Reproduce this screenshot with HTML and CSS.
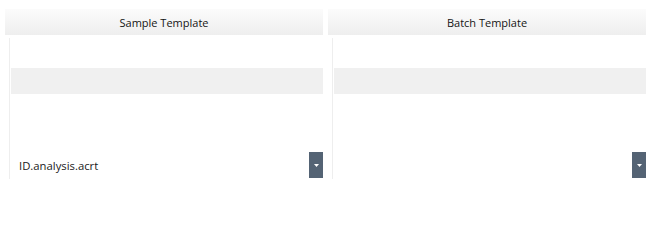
FILE: index.html
```html
<!DOCTYPE html>
<html>
<head>
<meta charset="utf-8">
<link rel="stylesheet" href="styles.css">
</head>
<body>
<div class="page">
  <div class="panel">
    <div class="header">Sample Template</div>
    <div class="body">
      <div class="gap-top"></div>
      <div class="band"></div>
      <div class="gap-mid"></div>
      <div class="select">
        <span class="select-text">ID.analysis.acrt</span>
        <span class="select-btn"><svg width="5" height="3" viewBox="0 0 5 3"><path d="M0 0H5L2.5 3Z" fill="#fff"/></svg></span>
      </div>
    </div>
  </div>
  <div class="panel">
    <div class="header">Batch Template</div>
    <div class="body">
      <div class="gap-top"></div>
      <div class="band"></div>
      <div class="gap-mid"></div>
      <div class="select">
        <span class="select-text"></span>
        <span class="select-btn"><svg width="5" height="3" viewBox="0 0 5 3"><path d="M0 0H5L2.5 3Z" fill="#fff"/></svg></span>
      </div>
    </div>
  </div>
</div>
</body>
</html>
```

FILE: styles.css
```css
html, body {
  margin: 0;
  padding: 0;
  background: #ffffff;
}
.page {
  display: flex;
  gap: 5px;
  padding: 9px 0 0 5px;
  font-family: "Open Sans", "Noto Sans", sans-serif;
  font-size: 11px;
  color: #141414;
}
.panel {
  width: 318px;
  display: flex;
  flex-direction: column;
}
.header {
  height: 26px;
  background: linear-gradient(#fbfbfb, #eeeeee);
  display: flex;
  align-items: center;
  justify-content: center;
}
.body {
  margin: 3px 0 0 4px;
  border-left: 1px solid #eeeeee;
  padding-left: 1px;
  height: 141px;
  display: flex;
  flex-direction: column;
}
.gap-top {
  height: 30px;
}
.band {
  height: 26px;
  background: #f0f0f0;
}
.gap-mid {
  height: 58px;
}
.select {
  height: 26px;
  display: flex;
  align-items: center;
  justify-content: space-between;
}
.select-text {
  padding-left: 8px;
  font-size: 11.3px;
  color: #1a1a1a;
}
.select-btn {
  width: 14px;
  height: 26px;
  background: #546374;
  display: flex;
  align-items: center;
  justify-content: center;
}
.select-btn svg {
  display: block;
}
```
